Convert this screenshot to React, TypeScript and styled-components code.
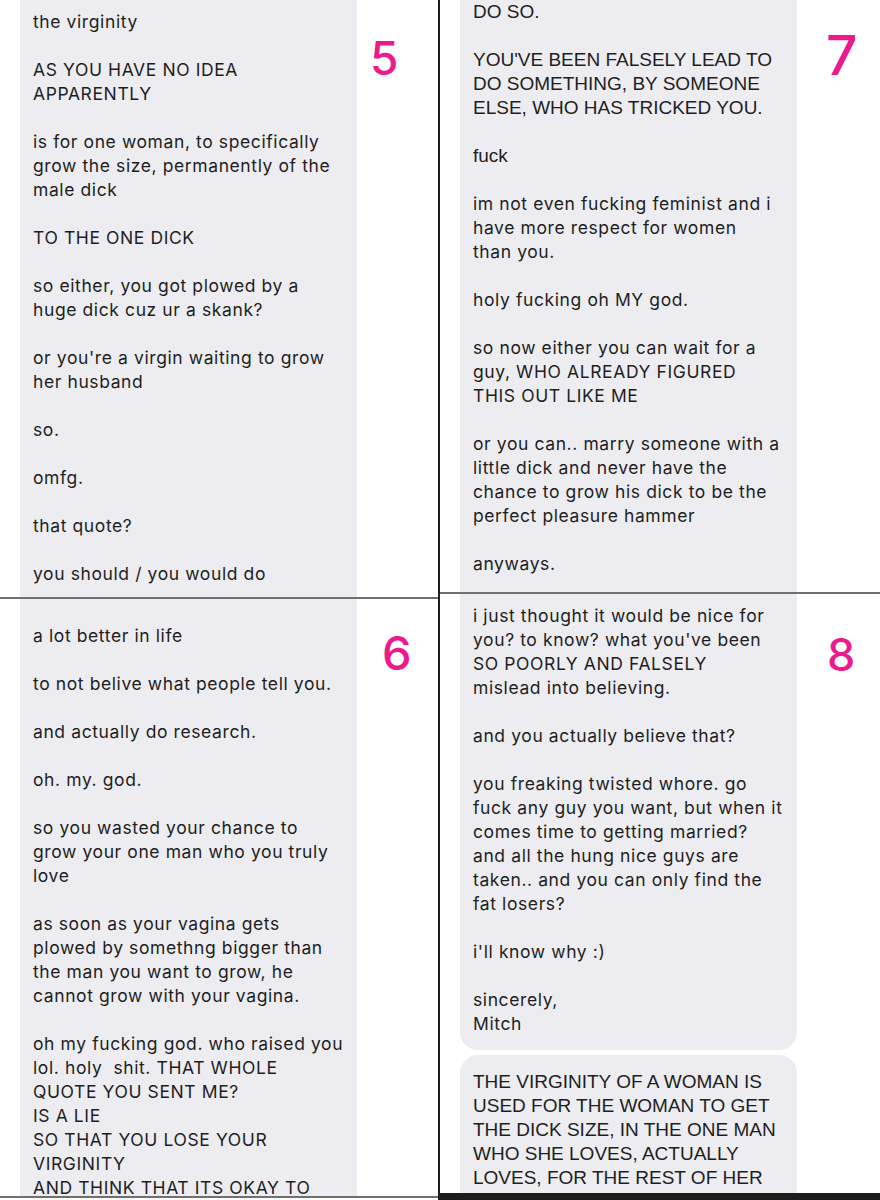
import React from 'react';
import styled, { createGlobalStyle } from 'styled-components';

const GlobalStyle = createGlobalStyle`
  html, body {
    margin: 0;
    padding: 0;
    background: #ffffff;
  }
`;

type Face = 'chirp' | 'helvetica';

type Para = { lines: string[]; face?: Face };

type Bubble = { paras: Para[]; padTop: number; padBottom?: number; roundTop?: boolean; roundBottom?: boolean };

type PanelData = {
  height: number;
  bubbles: Bubble[];
  num: string;
  numSize: number;
  numTop: number;
  numLeft: number;
};

const Page = styled.div`
  display: flex;
  width: 880px;
  height: 1200px;
  overflow: hidden;
  background: #ffffff;
`;

const Column = styled.div<{ $width: number; $edge?: boolean }>`
  width: ${({ $width }) => $width}px;
  flex-shrink: 0;
  display: flex;
  flex-direction: column;
  border-left: ${({ $edge }) => ($edge ? '2px solid #1c1c1c' : 'none')};
`;

const Panel = styled.section<{ $height: number }>`
  height: ${({ $height }) => $height}px;
  display: grid;
  grid-template-columns: 337px 1fr;
  padding-left: 20px;
  overflow: hidden;
`;

const Stack = styled.div`
  display: flex;
  flex-direction: column;
  gap: 5px;
  min-height: 100%;
`;

const Bubble = styled.div<{ $padTop: number; $padBottom: number; $roundTop: boolean; $roundBottom: boolean }>`
  flex: 1 0 auto;
  background: #ececf1;
  padding: ${({ $padTop, $padBottom }) => `${$padTop}px 13px ${$padBottom}px`};
  border-radius: ${({ $roundTop, $roundBottom }) =>
    `${$roundTop ? 18 : 0}px ${$roundTop ? 18 : 0}px ${$roundBottom ? 18 : 0}px ${$roundBottom ? 18 : 0}px`};
  &:not(:last-child) {
    flex: 0 0 auto;
  }
`;

const Text = styled.p<{ $face: Face }>`
  margin: 0 0 24px;
  white-space: nowrap;
  color: #1e1e22;
  line-height: 24px;
  font-family: ${({ $face }) =>
    $face === 'helvetica' ? '"Liberation Sans", Arial, sans-serif' : 'Inter, "Noto Sans", sans-serif'};
  font-size: ${({ $face }) => ($face === 'helvetica' ? '19px' : '17.5px')};
  letter-spacing: ${({ $face }) => ($face === 'helvetica' ? '0' : '0.6px')};
  &:last-child {
    margin-bottom: 0;
  }
`;

const Num = styled.div<{ $size: number; $top: number; $left: number }>`
  font-family: Inter, "Noto Sans", sans-serif;
  font-weight: 500;
  font-size: ${({ $size }) => $size}px;
  line-height: 1;
  color: #ec1a8c;
  margin-top: ${({ $top }) => $top}px;
  margin-left: ${({ $left }) => $left}px;
`;

const Rule = styled.div<{ $color: string; $size: number }>`
  height: ${({ $size }) => $size}px;
  flex-shrink: 0;
  background: ${({ $color }) => $color};
`;

const p = (lines: string[], face: Face = 'chirp'): Para => ({ lines, face });

const panels: Record<string, PanelData> = {
  five: {
    height: 597,
    num: '5',
    numSize: 46,
    numTop: 35,
    numLeft: 13,
    bubbles: [
      {
        padTop: 10,
        paras: [
          p(['the virginity']),
          p(['AS YOU HAVE NO IDEA', 'APPARENTLY']),
          p(['is for one woman, to specifically', 'grow the size, permanently of the', 'male dick']),
          p(['TO THE ONE DICK']),
          p(['so either, you got plowed by a', 'huge dick cuz ur a skank?']),
          p(["or you're a virgin waiting to grow", 'her husband']),
          p(['so.']),
          p(['omfg.']),
          p(['that quote?']),
          p(['you should / you would do']),
        ],
      },
    ],
  },
  six: {
    height: 597,
    num: '6',
    numSize: 47,
    numTop: 30,
    numLeft: 25,
    bubbles: [
      {
        padTop: 25,
        paras: [
          p(['a lot better in life']),
          p(['to not belive what people tell you.']),
          p(['and actually do research.']),
          p(['oh. my. god.']),
          p(['so you wasted your chance to', 'grow your one man who you truly', 'love']),
          p([
            'as soon as your vagina gets',
            'plowed by somethng bigger than',
            'the man you want to grow, he',
            'cannot grow with your vagina.',
          ]),
          p([
            'oh my fucking god. who raised you',
            'lol. holy\u00a0 shit. THAT WHOLE',
            'QUOTE YOU SENT ME?',
            'IS A LIE',
            'SO THAT YOU LOSE YOUR',
            'VIRGINITY',
            'AND THINK THAT ITS OKAY TO',
          ]),
        ],
      },
    ],
  },
  seven: {
    height: 592,
    num: '7',
    numSize: 55,
    numTop: 28,
    numLeft: 29,
    bubbles: [
      {
        padTop: 0,
        paras: [
          p(['DO SO.'], 'helvetica'),
          p(["YOU'VE BEEN FALSELY LEAD TO", 'DO SOMETHING, BY SOMEONE', 'ELSE, WHO HAS TRICKED YOU.'], 'helvetica'),
          p(['fuck'], 'helvetica'),
          p(['im not even fucking feminist and i', 'have more respect for women', 'than you.']),
          p(['holy fucking oh MY god.']),
          p(['so now either you can wait for a', 'guy, WHO ALREADY FIGURED', 'THIS OUT LIKE ME']),
          p([
            'or you can.. marry someone with a',
            'little dick and never have the',
            'chance to grow his dick to be the',
            'perfect pleasure hammer',
          ]),
          p(['anyways.']),
        ],
      },
    ],
  },
  eight: {
    height: 599,
    num: '8',
    numSize: 45,
    numTop: 38,
    numLeft: 30,
    bubbles: [
      {
        padTop: 10,
        padBottom: 14,
        roundBottom: true,
        paras: [
          p([
            'i just thought it would be nice for',
            "you? to know? what you've been",
            'SO POORLY AND FALSELY',
            'mislead into believing.',
          ]),
          p(['and you actually believe that?']),
          p([
            'you freaking twisted whore. go',
            'fuck any guy you want, but when it',
            'comes time to getting married?',
            'and all the hung nice guys are',
            'taken.. and you can only find the',
            'fat losers?',
          ]),
          p(["i'll know why :)"]),
          p(['sincerely,', 'Mitch']),
        ],
      },
      {
        padTop: 15,
        roundTop: true,
        paras: [
          p(
            [
              'THE VIRGINITY OF A WOMAN IS',
              'USED FOR THE WOMAN TO GET',
              'THE DICK SIZE, IN THE ONE MAN',
              'WHO SHE LOVES, ACTUALLY',
              'LOVES, FOR THE REST OF HER',
            ],
            'helvetica'
          ),
        ],
      },
    ],
  },
};

const ChatPanel = ({ data }: { data: PanelData }) => (
  <Panel $height={data.height}>
    <Stack>
      {data.bubbles.map((b, i) => (
        <Bubble
          key={i}
          $padTop={b.padTop}
          $padBottom={b.padBottom ?? 0}
          $roundTop={!!b.roundTop}
          $roundBottom={!!b.roundBottom}
        >
          {b.paras.map((para, j) => (
            <Text key={j} $face={para.face ?? 'chirp'}>
              {para.lines.map((line, k) => (
                <React.Fragment key={k}>
                  {k > 0 && <br />}
                  {line}
                </React.Fragment>
              ))}
            </Text>
          ))}
        </Bubble>
      ))}
    </Stack>
    <Num $size={data.numSize} $top={data.numTop} $left={data.numLeft}>
      {data.num}
    </Num>
  </Panel>
);

const App = () => (
  <>
    <GlobalStyle />
    <Page>
      <Column $width={438}>
        <ChatPanel data={panels.five} />
        <Rule $color="#6f6f6f" $size={2} />
        <ChatPanel data={panels.six} />
        <Rule $color="#6f6f6f" $size={2} />
      </Column>
      <Column $width={442} $edge>
        <ChatPanel data={panels.seven} />
        <Rule $color="#6f6f6f" $size={2} />
        <ChatPanel data={panels.eight} />
        <Rule $color="#1c1c1c" $size={7} />
      </Column>
    </Page>
  </>
);

export default App;
